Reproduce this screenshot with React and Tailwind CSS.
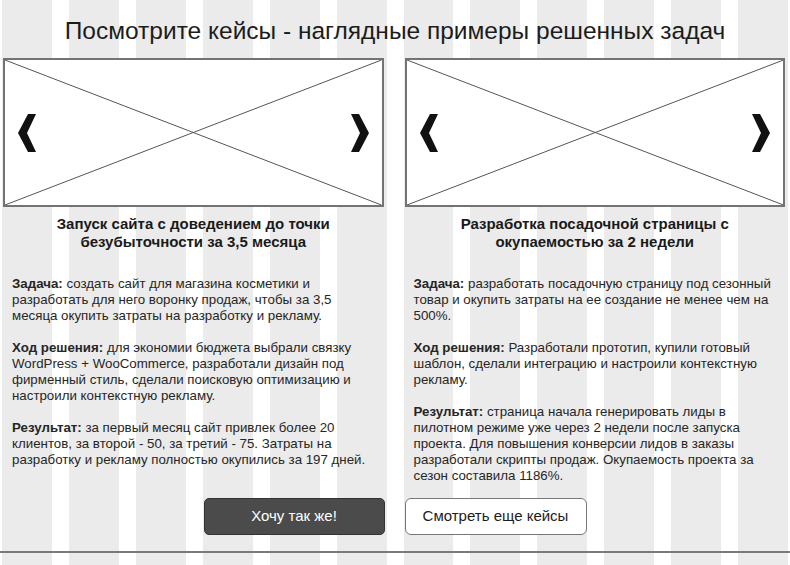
import React from "react";

const cases = [
  {
    title: ["Запуск сайта с доведением до точки", "безубыточности за 3,5 месяца"],
    blocks: [
      {
        label: "Задача:",
        text: "создать сайт для магазина косметики и разработать для него воронку продаж, чтобы за 3,5 месяца окупить затраты на разработку и рекламу.",
      },
      {
        label: "Ход решения:",
        text: "для экономии бюджета выбрали связку WordPress + WooCommerce, разработали дизайн под фирменный стиль, сделали поисковую оптимизацию и настроили контекстную рекламу.",
      },
      {
        label: "Результат:",
        text: "за первый месяц сайт привлек более 20 клиентов, за второй - 50, за третий - 75. Затраты на разработку и рекламу полностью окупились за 197 дней.",
      },
    ],
  },
  {
    title: ["Разработка посадочной страницы с", "окупаемостью за 2 недели"],
    blocks: [
      {
        label: "Задача:",
        text: "разработать посадочную страницу под сезонный товар и окупить затраты на ее создание не менее чем на 500%.",
      },
      {
        label: "Ход решения:",
        text: "Разработали прототип, купили готовый шаблон, сделали интеграцию и настроили контекстную рекламу.",
      },
      {
        label: "Результат:",
        text: "страница начала генерировать лиды в пилотном режиме уже через 2 недели после запуска проекта. Для повышения конверсии лидов в заказы разработали скрипты продаж. Окупаемость проекта за сезон составила 1186%.",
      },
    ],
  },
];

const Chevron = ({ dir }) => (
  <svg width="18" height="38" viewBox="0 0 18 38" className="block">
    {dir === "left" ? (
      <polygon points="10,0 18,0 9,19 18,38 10,38 0,19" fill="#111" />
    ) : (
      <polygon points="8,0 0,0 9,19 0,38 8,38 18,19" fill="#111" />
    )}
  </svg>
);

// image placeholder with slider arrows
const Slider = () => (
  <div className="relative h-[149px] border-2 border-[#737373] bg-white">
    <svg
      className="absolute inset-0 w-full h-full"
      viewBox="0 0 100 100"
      preserveAspectRatio="none"
    >
      <line x1="0" y1="0" x2="100" y2="100" stroke="#555" strokeWidth="1" vectorEffect="non-scaling-stroke" />
      <line x1="0" y1="100" x2="100" y2="0" stroke="#555" strokeWidth="1" vectorEffect="non-scaling-stroke" />
    </svg>
    <div className="relative h-full flex items-center justify-between px-[13px]">
      <Chevron dir="left" />
      <Chevron dir="right" />
    </div>
  </div>
);

const CaseCard = ({ item }) => (
  <div className="flex flex-col">
    <Slider />
    <h3 className="mt-[8px] text-center font-bold text-[15px] leading-[18px] text-[#1a1a1a]">
      {item.title[0]}
      <br />
      {item.title[1]}
    </h3>
    <div className="mt-[25px] px-[9px] text-[13.3px] leading-[16px] text-[#262626]">
      {item.blocks.map((b, i) => (
        <p key={i} className="mb-4 last:mb-0">
          <span className="font-bold">{b.label}</span> {b.text}
        </p>
      ))}
    </div>
  </div>
);

const App = () => {
  return (
    <div
      className="relative w-[790px] h-[565px] overflow-hidden bg-white"
      style={{ fontFamily: '"Liberation Sans", Arial, sans-serif' }}
    >
      {/* column grid backdrop */}
      <div className="absolute inset-0 grid grid-cols-12 gap-[17px] px-[2px]">
        {Array.from({ length: 12 }).map((_, i) => (
          <div key={i} className="bg-[#ebebeb]" />
        ))}
      </div>

      <div className="relative flex flex-col h-full">
        <h1 className="pt-[17px] text-center text-[24.5px] leading-[28px] text-[#1c1c1c]">
          Посмотрите кейсы - наглядные примеры решенных задач
        </h1>

        <div className="mt-[13px] grid grid-cols-2 gap-[21px] pl-[3px] pr-[5px]">
          {cases.map((c, i) => (
            <CaseCard key={i} item={c} />
          ))}
        </div>

        <div className="mt-[14px] flex justify-center gap-[20px]">
          <button className="w-[181px] h-[37px] rounded-[5px] bg-[#4b4b4b] border border-[#333] text-white text-[15px]">
            Хочу так же!
          </button>
          <button className="w-[182px] h-[37px] rounded-[6px] bg-white border border-[#777] text-[#1c1c1c] text-[15px]">
            Смотреть еще кейсы
          </button>
        </div>

        <div className="mt-[16px] h-[2px] bg-[#7a7a7a]" />
      </div>
    </div>
  );
};

export default App;
